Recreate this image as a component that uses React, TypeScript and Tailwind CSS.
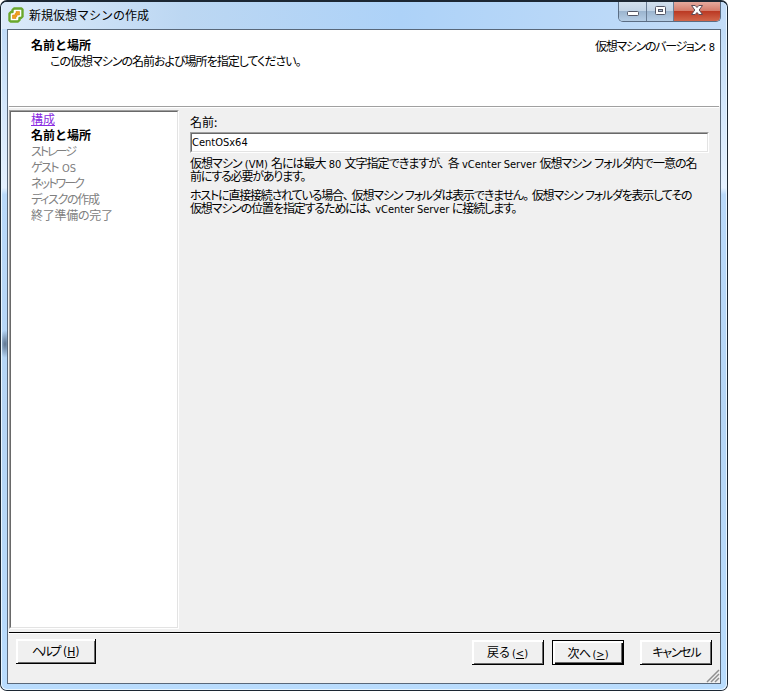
import React from 'react'
import clsx from 'clsx'

interface LineProps {
  className?: string
  children: React.ReactNode
}

// One line of dialog text, spread evenly over the width of its box
function Line({ className, children }: LineProps) {
  return (
    <div
      className={clsx(
        'whitespace-nowrap [text-align-last:justify] [font-feature-settings:"palt"]',
        className
      )}
    >
      {children}
    </div>
  )
}

function Latin({ className, children }: { className?: string; children: React.ReactNode }) {
  return (
    <span
      className={clsx(
        "font-['DejaVu_Sans_Condensed','DejaVu_Sans',sans-serif] leading-none tracking-[0px] [word-spacing:-1px] [font-stretch:condensed]",
        className || 'text-[11px]'
      )}
    >
      {children}
    </span>
  )
}

// Full-width punctuation keeps some air after it
function Stop({ children }: { children: React.ReactNode }) {
  return <span className="mr-[4px]">{children}</span>
}

function AppIcon() {
  return (
    <svg width="16" height="16" viewBox="0 0 16 16" fill="none">
      <path
        d="M6 1.500H13.500L14.500 2.500V9.500L13 11H11.500V13L10 14.500H2.500L1.500 13.500V6.500L3 5H4.500V3z"
        fill="#fff"
        stroke="#6aa82c"
        strokeWidth="2.400"
        strokeLinejoin="round"
      />
      <path d="M8 4.500H11.500V8H9V9.500H8V11.500H4.500V8H7V6.500H8z" fill="#f0a01e" stroke="#d68412" strokeWidth="0.600" />
    </svg>
  )
}

function WindowButtons() {
  return (
    <div className="flex h-[20px] w-[103px] overflow-hidden rounded-b-[5px] border border-t-0 border-[#5b6d84]">
      <div className="flex w-[28px] items-center justify-center border-r border-[#6a7d95] bg-[linear-gradient(#d2e0ee_0%,#c2d4e6_45%,#9cb5cf_50%,#b5cde5_100%)]">
        <svg width="14" height="8" viewBox="0 0 14 8" className="mt-[4px]">
          <rect x="1.500" y="1.500" width="11" height="4" rx="1" fill="#fff" stroke="#535666" />
        </svg>
      </div>
      <div className="flex w-[27px] items-center justify-center border-r border-[#6a7d95] bg-[linear-gradient(#d2e0ee_0%,#c2d4e6_45%,#9cb5cf_50%,#b5cde5_100%)]">
        <svg width="13" height="11" viewBox="0 0 13 11" className="mt-[-3px]">
          <rect x="1.500" y="1.500" width="10" height="8" rx="1" fill="#fff" stroke="#535666" />
          <rect x="4.500" y="4.500" width="4" height="2" fill="#a5bad0" stroke="#535666" />
        </svg>
      </div>
      <div className="flex flex-1 items-center justify-center bg-[linear-gradient(#e5aa9e_0%,#d57d6c_45%,#bb3a24_50%,#d1664a_100%)]">
        <svg width="14" height="12" viewBox="0 0 14 12" className="mt-[-3px]">
          <path
            d="M1.500 1.500h3.700L7 3.500l1.800-2h3.700L9.200 6l3.300 4.500H8.800L7 8.500l-1.800 2H1.500L4.800 6z"
            fill="#fff"
            stroke="#5b4a55"
          />
        </svg>
      </div>
    </div>
  )
}

interface DialogButtonProps {
  className?: string
  primary?: boolean
  children: React.ReactNode
}

function DialogButton({ className, primary, children }: DialogButtonProps) {
  return (
    <button
      className={clsx(
        'flex h-[25px] items-center justify-center bg-[#f0f0f0]',
        primary
          ? 'border border-black shadow-[inset_1px_1px_#fff,inset_2px_2px_#fff,inset_-1px_-1px_#000,inset_-2px_-2px_#696969]'
          : 'border-r border-b border-black shadow-[inset_2px_2px_#fff,inset_-1px_-1px_#696969]',
        className
      )}
    >
      {children}
    </button>
  )
}

function TitleBar() {
  return (
    <div className="flex h-[27px] items-start justify-between rounded-t-[5px] bg-[linear-gradient(90deg,#dceafa_0%,#bcd7f2_25%,#add2f8_55%,#c4ddf8_100%)] pl-[6px]">
      <div className="flex items-center pt-[5px]">
        <AppIcon />
        <span className="ml-[5px] text-[12px] leading-[16px]">新規仮想マシンの作成</span>
      </div>
      <div className="pr-[5px]">
        <WindowButtons />
      </div>
    </div>
  )
}

function Header() {
  return (
    <div className="flex h-[76px] justify-between bg-white">
      <div className="pt-[7px] pl-[23px]">
        <div className="text-[12px] leading-[16px] font-bold">名前と場所</div>
        <Line className="ml-[19px] w-[246px] tracking-[-1px]">
          この仮想マシンの名前および場所を指定してください。
        </Line>
      </div>
      <Line className="mt-[8px] mr-[5px] h-[16px] w-[120px] tracking-[-1.5px]">
        仮想マシンのバージョン:<Latin className="ml-[4px] text-[11px]">8</Latin>
      </Line>
    </div>
  )
}

function Steps() {
  return (
    <div className="h-[519px] w-[170px] border border-t-[#a0a0a0] border-r-white border-b-white border-l-[#a0a0a0]">
      <div className="h-full border border-t-[#696969] border-r-[#e3e3e3] border-b-[#e3e3e3] border-l-[#696969] bg-white pl-[20px] leading-[14px] text-[#808080]">
        <div className="h-[16px] w-[25px] text-[#8a2be2] underline">構成</div>
        <div className="h-[16px] font-bold text-black">名前と場所</div>
        <Line className="h-[16px] w-[44px] tracking-[-2px]">ストレージ</Line>
        <Line className="h-[16px] w-[45px] tracking-[-2.5px]">
          ゲスト<Latin className="ml-[4px] text-[11px]">OS</Latin>
        </Line>
        <Line className="h-[16px] w-[51px] tracking-[-3px]">ネットワーク</Line>
        <Line className="h-[16px] w-[67px] tracking-[-2px]">ディスクの作成</Line>
        <Line className="h-[16px] w-[81px] tracking-[-1px]">終了準備の完了</Line>
      </div>
    </div>
  )
}

function NameForm() {
  return (
    <div className="w-[519px] pt-[4px]">
      <Line className="h-[16px] w-[27px]">名前:</Line>
      <div className="mt-[2px] h-[21px] border border-t-[#a0a0a0] border-r-white border-b-white border-l-[#a0a0a0]">
        <div className="flex h-full items-center border border-t-[#696969] border-r-[#e3e3e3] border-b-[#e3e3e3] border-l-[#696969] bg-white">
          <Latin>CentOSx64</Latin>
        </div>
      </div>
      <div className="mt-[3px] leading-[13px]">
        <Line className="h-[13px] w-[506px] tracking-[-1.5px] [word-spacing:1.5px]">
          仮想マシン <Latin>(VM)</Latin> 名には最大 <Latin>80</Latin> 文字指定できますが<Stop>、</Stop>各{' '}
          <Latin>vCenter Server</Latin> 仮想マシン フォルダ内で一意の名
        </Line>
        <Line className="h-[13px] w-[115px] tracking-[-1.5px]">前にする必要があります。</Line>
      </div>
      <div className="mt-[6px] leading-[13px]">
        <Line className="h-[13px] w-[501px] tracking-[-1.5px] [word-spacing:1px]">
          ホストに直接接続されている場合<Stop>、</Stop>仮想マシン フォルダは表示できません<Stop>。</Stop>仮想マシン フォルダを表示してその
        </Line>
        <Line className="h-[13px] w-[326px] tracking-[-1.5px] [word-spacing:1px]">
          仮想マシンの位置を指定するためには<Stop>、</Stop>
          <Latin>vCenter Server</Latin> に接続します。
        </Line>
      </div>
    </div>
  )
}

function Footer() {
  return (
    <div className="relative flex h-[50px] items-start border-t border-white px-[8px]">
      <DialogButton className="mt-[5px] w-[80px]">
        <Line className="h-[17px] w-[47px] tracking-[-2.5px]">
          ヘルプ<Latin className="ml-[4px] text-[12px]">(<u>H</u>)</Latin>
        </Line>
      </DialogButton>
      <DialogButton className="mt-[6px] ml-auto w-[72px]">
        <Line className="h-[16px] w-[41px] tracking-[-1.5px]">
          戻る<Latin className="ml-[2px] text-[11px]">(<u>&lt;</u>)</Latin>
        </Line>
      </DialogButton>
      <DialogButton primary className="mt-[6px] ml-[8px] w-[72px]">
        <Line className="h-[16px] w-[41px] tracking-[-1.5px]">
          次へ<Latin className="ml-[2px] text-[11px]">(<u>&gt;</u>)</Latin>
        </Line>
      </DialogButton>
      <DialogButton className="mt-[6px] ml-[16px] w-[72px]">
        <Line className="h-[16px] w-[46px] tracking-[-3px]">キャンセル</Line>
      </DialogButton>
      <svg width="14" height="14" viewBox="0 0 14 14" className="absolute right-0 bottom-0" stroke="#909090">
        <path d="M1 13L13 1M5 13L13 5M9 13L13 9" strokeWidth="1.500" />
      </svg>
    </div>
  )
}

export default function App() {
  return (
    <div className="h-[691px] w-[760px] overflow-hidden bg-white font-['Noto_Sans_CJK_JP',sans-serif] text-[12px] leading-[16px] text-black">
      <div className="h-[691px] w-[728px] rounded-[7px] border border-t-2 border-[#1c2733] bg-[linear-gradient(#b9d7f6_0%,#d4e7fb_15%,#e4f1ff_27%,#b9d9fa_28%,#b5d5f5_60%,#b9dcfd_100%)]">
        <div className="h-full rounded-[6px] border border-t-0 border-[#e8f5ff] bg-[radial-gradient(6px_14px_at_3px_342px,#5f7590,transparent)]">
          <TitleBar />
          <div className="mx-[5px] flex h-[655px] flex-col border border-[#59687a] bg-[#f0f0f0]">
            <Header />
            <div className="mx-[1px] h-[2px] border-t border-[#a0a0a0] bg-white" />
            <div className="flex h-[524px] gap-[11px] pt-[2px] pl-[1px]">
              <Steps />
              <NameForm />
            </div>
            <div className="ml-[1px] h-px bg-black" />
            <Footer />
          </div>
        </div>
      </div>
    </div>
  )
}
